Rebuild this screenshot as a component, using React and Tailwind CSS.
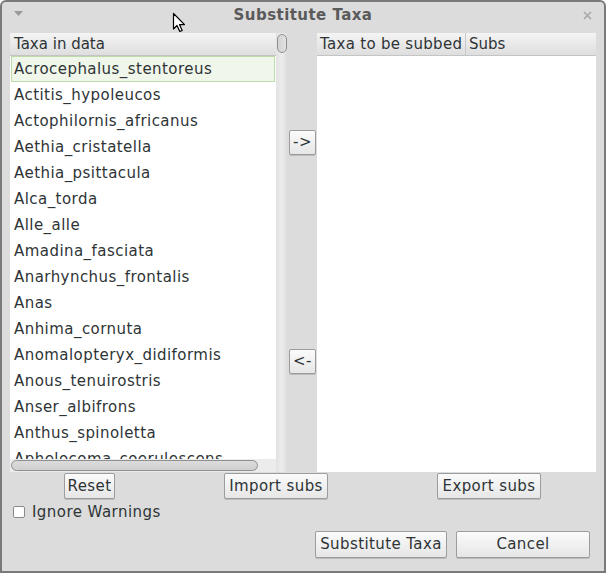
import React from "react";

const taxa = [
  "Acrocephalus_stentoreus",
  "Actitis_hypoleucos",
  "Actophilornis_africanus",
  "Aethia_cristatella",
  "Aethia_psittacula",
  "Alca_torda",
  "Alle_alle",
  "Amadina_fasciata",
  "Anarhynchus_frontalis",
  "Anas",
  "Anhima_cornuta",
  "Anomalopteryx_didiformis",
  "Anous_tenuirostris",
  "Anser_albifrons",
  "Anthus_spinoletta",
  "Aphelocoma_coerulescens",
];

function Btn({ children, className = "" }) {
  return (
    <div
      className={
        "flex items-center justify-center border border-[#9c9c9c] rounded-[2px] bg-gradient-to-b from-[#fbfbfb] to-[#e6e6e6] text-[#2e3436] tracking-[0.4px] shadow-[0_1px_0_rgba(0,0,0,0.15)] " +
        className
      }
    >
      {children}
    </div>
  );
}

export default function App() {
  return (
    <div
      className="relative w-[606px] h-[573px] bg-[#dcdcdc] border-2 border-[#7a7a7a] rounded-t-[6px] text-[15px] text-[#2e3436] overflow-hidden"
      style={{ fontFamily: "'DejaVu Sans', 'Liberation Sans', sans-serif" }}
    >
      {/* Title bar */}
      <div className="relative h-[31px] flex items-center justify-center">
        <svg className="absolute left-[12px] top-[9px]" width="9" height="6" viewBox="0 0 9 6">
          <path d="M0 0 L9 0 L4.5 5 Z" fill="#9a9a9a" />
        </svg>
        <span className="font-bold text-[#5a5a5a] -mt-[4px] tracking-[0.45px]">Substitute Taxa</span>
        <svg className="absolute right-[12px] top-[9px]" width="9" height="9" viewBox="0 0 9 9">
          <path d="M1 1 L8 8 M8 1 L1 8" stroke="#a8a8a8" strokeWidth="1.6" />
        </svg>
      </div>

      {/* Body */}
      <div className="flex h-[439px] pl-[8px]">
        {/* Left panel */}
        <div className="w-[278px] grid grid-cols-[266px_12px] grid-rows-[23px_1fr_13px]">
          <div className="border-b border-[#c4c4c4] bg-gradient-to-b from-[#f4f4f4] to-[#dedede] pl-[4px] flex items-center leading-none">
            Taxa in data
          </div>
          <div className="row-span-3 bg-gradient-to-r from-[#e2e2e2] via-[#ededed] to-[#dadada] relative">
            <div className="absolute left-[1px] top-[1px] w-[10px] h-[19px] rounded-full border border-[#8f8f8f] bg-gradient-to-r from-[#d2d2d2] to-[#e2e2e2]" />
          </div>
          <div className="bg-white overflow-hidden">
            {taxa.map((t, i) => (
              <div
                key={t}
                className={
                  "h-[26px] flex items-center pl-[2px] whitespace-nowrap border mx-[1px] tracking-[0.45px] " +
                  (i === 0 ? "bg-[#f0f6ea] border-[#bcd9a8]" : "border-transparent")
                }
              >
                {t}
              </div>
            ))}
          </div>
          <div className="bg-[#ececec] relative">
            <div className="absolute left-[1px] top-[1px] w-[247px] h-[11px] rounded-full border border-[#8f8f8f] bg-gradient-to-b from-[#dcdcdc] to-[#cfcfcf]" />
          </div>
        </div>

        {/* Middle arrows */}
        <div className="w-[29px] flex flex-col items-center pt-[97px] gap-[194px]">
          <Btn className="w-[27px] h-[25px]">-&gt;</Btn>
          <Btn className="w-[27px] h-[25px]">&lt;-</Btn>
        </div>

        {/* Right panel */}
        <div className="w-[279px] flex flex-col">
          <div className="h-[23px] grid grid-cols-[149px_130px] border-b border-[#c4c4c4] bg-gradient-to-b from-[#f4f4f4] to-[#dedede]">
            <div className="pl-[3px] flex items-center border-r border-[#c8c8c8] leading-none tracking-[0.3px]">Taxa to be subbed</div>
            <div className="pl-[3px] flex items-center leading-none">Subs</div>
          </div>
          <div className="flex-1 bg-white" />
        </div>
      </div>

      {/* Import / export row */}
      <div className="flex gap-[109px] pl-[62px] mt-[1px]">
        <Btn className="w-[51px] h-[26px]">Reset</Btn>
        <Btn className="w-[104px] h-[26px]">Import subs</Btn>
        <Btn className="w-[104px] h-[26px]">Export subs</Btn>
      </div>

      {/* Checkbox */}
      <div className="flex items-center pl-[11px] mt-[6px] h-[13px]">
        <div className="w-[12px] h-[12px] border border-[#8a8a8a] rounded-[2px] bg-white" />
        <span className="ml-[7px] tracking-[0.45px] mt-[1px]">Ignore Warnings</span>
      </div>

      {/* Bottom buttons */}
      <div className="flex justify-end gap-[9px] pr-[14px] mt-[13px]">
        <Btn className="w-[132px] h-[27px]">Substitute Taxa</Btn>
        <Btn className="w-[134px] h-[27px]">Cancel</Btn>
      </div>

      {/* Mouse cursor */}
      <svg className="absolute left-[170px] top-[10px]" width="16" height="22" viewBox="0 0 16 22">
        <path
          d="M1.5 1.5 L1.5 17 L5 13.5 L7.8 19.5 L10.2 18.4 L7.5 12.6 L12.5 12.6 Z"
          fill="white"
          stroke="black"
          strokeWidth="1.2"
          strokeLinejoin="round"
        />
      </svg>
    </div>
  );
}
